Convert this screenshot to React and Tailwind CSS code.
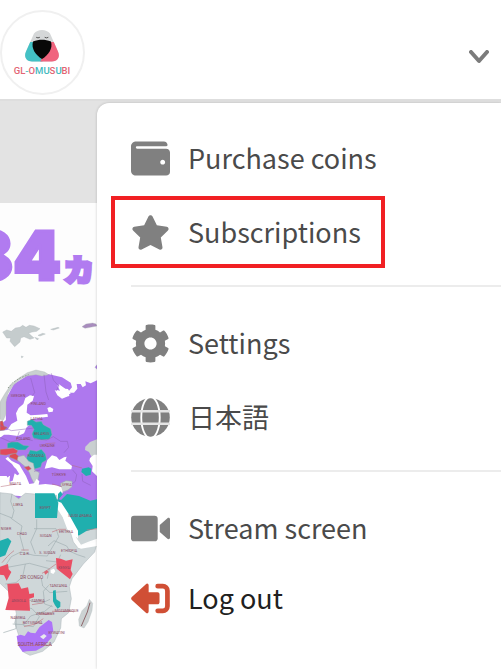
import { useState } from 'react';
import { FaWallet, FaStar, FaCog } from 'react-icons/fa';

const GlobeIcon = ({ className }) => (
    <svg viewBox="0 0 38 38" className={className} aria-hidden="true">
        <circle cx="19" cy="19" r="18.800" fill="currentColor" />
        <g fill="none" stroke="#fff" strokeWidth="1.800">
            <ellipse cx="19" cy="19" rx="9" ry="20" />
            <path d="M0 13h38M0 25h38" stroke="#e4e4e4" strokeWidth="2.400" />
        </g>
    </svg>
);

const VideoIcon = ({ className }) => (
    <svg viewBox="0 0 38 38" className={className} fill="currentColor" aria-hidden="true">
        <rect x="0" y="6.500" width="26" height="25" rx="3" />
        <path d="M28 15.500 35.500 9c1-.9 2.500-.3 2.500 1v18c0 1.300-1.500 1.900-2.500 1L28 22.500Z" />
    </svg>
);

const LogoutIcon = ({ className }) => (
    <svg viewBox="0 0 38 30" className={className} fill="none" aria-hidden="true">
        <path
            d="M.8 13.600 14.500 1c1.300-1.200 2.700-.4 2.700 1.400V9h8.600c1.200 0 2 .8 2 2v7.600c0 1.200-.8 2-2 2h-8.600v6.800c0 1.800-1.400 2.600-2.700 1.400L.8 16.400c-.9-.8-.9-2 0-2.800Z"
            fill="#d04f35"
        />
        <path d="M26 3h5a4.500 4.500 0 0 1 4.500 4.500v15a4.500 4.500 0 0 1-4.500 4.500h-5" stroke="#d04f35" strokeWidth="4.600" strokeLinecap="round" />
    </svg>
);

const groups = [
    {
        id: 'account',
        items: [
            { label: 'Purchase coins', icon: FaWallet },
            { label: 'Subscriptions', icon: FaStar, highlighted: true },
        ],
    },
    {
        id: 'preferences',
        items: [
            { label: 'Settings', icon: FaCog },
            { label: '日本語', icon: GlobeIcon, lang: 'ja' },
        ],
    },
    {
        id: 'session',
        compact: true,
        items: [
            { label: 'Stream screen', icon: VideoIcon },
            { label: 'Log out', icon: LogoutIcon, dark: true },
        ],
    },
];

const northLabels = [
    { text: 'SWEDEN', x: 54, y: 112 },
    { text: 'FINLAND', x: 115, y: 134 },
    { text: 'LATVIA', x: 110, y: 180 },
    { text: 'BELARUS', x: 125, y: 226 },
    { text: 'POLAND', x: 70, y: 241 },
    { text: 'UKRAINE', x: 142, y: 261 },
    { text: 'ROMANIA', x: 107, y: 291 },
    { text: 'TÜRKIYE', x: 177, y: 348 },
    { text: 'MALTA', x: 46, y: 376 },
    { text: 'SYRIA', x: 200, y: 377 },
    { text: 'IRAQ', x: 233, y: 399 },
];

const southLabels = [
    { text: 'LIBYA', x: 54, y: 49 },
    { text: 'EGYPT', x: 136, y: 56 },
    { text: 'SAUDI ARABIA', x: 240, y: 80 },
    { text: 'NIGER', x: 18, y: 120 },
    { text: 'CHAD', x: 66, y: 136 },
    { text: 'SUDAN', x: 137, y: 140 },
    { text: 'ERITREA', x: 198, y: 128 },
    { text: 'C.A.R.', x: 74, y: 195 },
    { text: 'S. SUDAN', x: 142, y: 192 },
    { text: 'ETHIOPIA', x: 207, y: 186 },
    { text: 'KENYA', x: 192, y: 238 },
    { text: 'DR CONGO', x: 95, y: 268, size: 14 },
    { text: 'TANZANIA', x: 175, y: 292 },
    { text: 'ANGOLA', x: 56, y: 335 },
    { text: 'ZAMBIA', x: 114, y: 336 },
    { text: 'ZIMBABWE', x: 136, y: 376 },
    { text: 'MOZAMBIQUE', x: 200, y: 365 },
    { text: 'NAMIBIA', x: 54, y: 388 },
    { text: 'BOTSWANA', x: 98, y: 402 },
    { text: 'ESWATINI', x: 170, y: 432 },
    { text: 'SOUTH AFRICA', x: 104, y: 468, size: 15 },
];

function Logo() {
    return (
        <svg viewBox="0 0 81 81" className="size-full" role="img" aria-label="GL-OMUSUBI">
            <defs>
                <clipPath id="rice">
                    <path d="M32 21.500c3.500-4.800 12.500-4.800 16 0l8 18c2.500 5.500-.5 10-6 10H30c-5.500 0-8.500-4.500-6-10Z" />
                </clipPath>
            </defs>
            <g clipPath="url(#rice)">
                <path d="M20 15h40v40H20Z" fill="#d5d7d8" />
                <path d="M20 30h12l8.500 15v8H20Z" fill="#43c1c5" />
                <path d="M60 30H48l-7.500 15-4 8H60Z" fill="#f0647e" />
            </g>
            <path d="M31 29.500c6-2.500 12-2.500 18 0 2 7-2.500 13.500-9 17.500-6.500-4-11-10.500-9-17.500Z" fill="#080808" />
            <path d="M34.500 25.500q1.500 1 3 0M43 25.500q1.500 1 3 0" fill="none" stroke="#555" strokeWidth="1" strokeLinecap="round" />
            <text x="40" y="62" textAnchor="middle" fontSize="9.500" fontWeight="500" fontFamily="Roboto, sans-serif">
                <tspan fill="#e26573">GL</tspan>
                <tspan fill="#59bfc2">-</tspan>
                <tspan fill="#e26573">O</tspan>
                <tspan fill="#42b9be">MU</tspan>
                <tspan fill="#e26573">S</tspan>
                <tspan fill="#42b9be">U</tspan>
                <tspan fill="#e26573">BI</tspan>
            </text>
        </svg>
    );
}

function MapLabels({ labels }) {
    return (
        <g fill="#8d4a62" fontFamily="Roboto, sans-serif" textAnchor="middle">
            {labels.map((l) => (
                <text key={l.text} x={l.x} y={l.y} fontSize={l.size || 11}>{l.text}</text>
            ))}
        </g>
    );
}

function WorldMap() {
    return (
        <svg viewBox="0 0 291 1107" className="block w-full" role="img" aria-label="World map">
            {/* Arctic islands */}
            <g transform="translate(0 30)" fill="#c5cccd" stroke="#aab4b6" strokeWidth="1">
                <path d="m8 66 12-6 14 4 12-10 14-2 8-6 10 6 10-6 14 2 18 8-10 8-14 2-10 4 16 14-12 4-18-8-10 4-2 12-16 14-14-16 2-10-12 0Z" />
                <path d="m114 76 14-6 8 2-16 6Zm38-18 22-6 4 2-18 6Zm-48 24 12 4-4 4Z" />
                <path d="m64 138 6 2-5 4Z" />
                <path d="m246 50 12-8 20-3 10 3 3 6-20 4-16 3Z" fill="#a88cbd" />
                <path d="m285 172 6-8v14Z" fill="#ae78ee" />
            </g>

            {/* Europe, Russia and the Middle East */}
            <g transform="translate(0 180)">
                <path d="m0 450V195l18-15-2-60 26-48 42-26 30-8 30 4 42 10 26 16 4 14-14 16-22 0-16-8 8 16 14 10 14-6 2-12 20 0 10-12-2-14 12 0 6 10 10-6-2-12 16 6 24-12v378Z" fill="#ae78ee" />
                <path d="m0 148 0-22 14-24 16-24 24-22 28-18 26-8 26 6 12 8-20 4-18-4-28 4-22 12-18 16-16 24-6 26 0 36-8 18-10-2Z" fill="#c9d0d0" stroke="#a9b2ae" strokeWidth="1" />
                <path d="m24 84 14-16 22-14 26-10" fill="none" stroke="#8f9c8d" strokeWidth="3" strokeDasharray="5 4" />

                {/* Baltic Sea and lakes */}
                <path d="m0 212 22-2 12-18 18-10-4-22 8-16 14-12 6-18 14-8 12 2-4 14-16 12-2 24 12 8 26-2 24-2 2 8-28 4-24 4 0 14-12 10-8 18-18 8-28-4-14 0-16 12Z" fill="#fff" />
                <path d="m142 144 8-3 10 6-2 8-12 2Z" fill="#fff" />
                <path d="m172 76 22 10 12 8 2 14-14 4-20-8-4-14 10 2Z" fill="#fff" />
                <path d="m176 72 20 14 8 1 8 14-12 3-16-10Z" fill="#fff" />

                <g stroke="#97aaad" strokeWidth="1.500" strokeLinejoin="round">
                    <path d="m0 184 8-2 4 16 10 4-8 8-14 2Z" fill="#dc4b53" />
                    <path d="m82 184 14-6 12 8 16-2 6 10 22 12 4 18-8 14-24 2-24-6-4-12 6-14-8-12-12 0Z" fill="#20afae" />
                    <path d="m22 250 12-4 20 0 16 10 18 2-12 12-22 0-18-6-14 0Z" fill="#20afae" />
                    <path d="m90 270 20 4 14-6 12 14 4 18-14 8-4 14-22 6-14-10-8-20Z" fill="#20afae" />
                    <path d="m0 268 22-2 18-2 14 8-6 10-14 0-16 4-18-2Z" fill="#e04a5c" />
                    <path d="m30 284 16-4 14 12 2 12-10-2-12-6-12-4Z" fill="#dc4b53" />
                    <path d="m54 290 18-4 14 18 14 6 4 20 14 8-4 22-12 10-8-16-6-16-10-16-12-10-14-12Z" fill="#cad0d1" />
                    <path d="m72 322 14-4 8 8-10 6Z" fill="#e04a5c" />
                    <path d="m182 370 16-8 18 2 0 16-12 10-22 8Z" fill="#cad0d1" />
                </g>

                {/* Mediterranean, Black Sea, Caspian */}
                <path d="M24 290c8 14 20 16 34 24l20 34 10 24 14-2 8-14 8 8-2 10 20-2 34 4 14 6 4 14-6 22-36-2-22-8-38 12-26-12-34-2-26-4v-38l10-2 18-14 12-4 8-14-12-18-20-16Z" fill="#fff" />
                <path d="m0 292 16 4 10 14 22 16 10 16-6 4-8-6-6 22-10 4 2-18-16-20-14-12Z" fill="#ae78ee" />
                <path d="m0 348 20 0 8 16-28 6Z" fill="#fff" />
                <path d="m142 300 14-14 14 4 8 10 14-8 8-2-4 12 20 16-2 10-36 0-22-6-22 4Z" fill="#fff" />
                <path d="m256 260 14-14 21-8v50l-16 4-8-16-12-6Z" fill="#c9cfd0" />
                <path d="m270 294 12-10 9 0v64l-15-14 2-16-10-16Z" fill="#fff" />
                <path d="m246 326 20-4 8 4-2 18-14 4-14-12Z" fill="#20afae" />
                <path d="m174 402 8-8 4 6-4 22-8-6Z" fill="#20afae" />
                <path d="m266 400 25 12v38h-30Z" fill="#ae78ee" />

                <g fill="none" stroke="#8d61b9" strokeWidth="1.500">
                    <path d="m92 54 12 44-8 10M132 44l6 52 8 24M154 40l6 20 16 18-6 12M0 196l34 16 68-8M0 232l32 14 44-10 22 6M58 214l-8 24M102 236l38 4 20-10 22 14 20 0 4 18-14 16M120 330l-18 4M218 330l12 14-4 20-10 8M246 342l2 22 24 12" />
                </g>
                <path d="m216 316 30 8M2 380l48-8M156 372l30 8M136 251l30-2" fill="none" stroke="#b46a79" strokeWidth="1.500" />
                <MapLabels labels={northLabels} />
            </g>

            {/* Africa and Arabia */}
            <g transform="translate(0 570)">
                <path d="M0 8l36 4 20 14 20-16 28 2 66 4 10 50 28 50 12 40 14 18 20-2 36-8-6 22-34 36-34 44-8 24 6 36-8 42-22 18-2 28-20 42-34 28-38 12-20-10-12-44-14-44 6-22-6-32-14-36-32-30Z" fill="#cfd7d9" stroke="#aab5b8" strokeWidth="1.500" />
                <path d="m180 14 20-8 38-6 53 0v120l-50 24-14-18-32-58-24-36Z" fill="#20afae" />
                <path d="m176 28 16-20 26-8h73v28l-20 4-34-14-36-6-18 18Z" fill="#ae78ee" />
                <path d="m228 142 30-18 33-10v32l-22 8-26 10Z" fill="#cfd7d9" />
                <path d="m168 32 16 6 22 34 28 50 0 24-12-12-20-16-14-36-16-26Z" fill="#fff" />
                <path d="m232 172 20-8 39-8v12l-48 8Z" fill="#fff" />

                <g fill="none" stroke="#a0adb0" strokeWidth="2">
                    <path d="m0 70 36 14 6-22-10-28 4-22m-4 72 34 24-6 30 12 44m38-94 0 28-18 40 14 36m-4-76h66m0 0 8 24-18 30-16 28-40-2-40-10-28 14-20 30m130-62 18-16 38 16 10 16 22 10 24 8m-74-8-10 22-34-4m-116 20 66-12 60 16-6 30m-66-44-8 38-20 18-32 4m108-16 4 22 22 20 52-4m-56-18-16 18 4 38 24 8m-72-20 38 10 26-12m-22 38-36 12-20 26-34-2m10-28v42l-38 12m60-78 26 6 22 24-18 30-30-4m40-34 24-8 22-18" />
                </g>

                <path d="M105 10h58l12 28-4 46h-66Z" fill="#20afae" />
                <path d="m0 152 24-8 10 10-10 22-8 20-16 6Z" fill="#20afae" />
                <path d="m168 204 14 2 16 6 20-4-6 32 6 12-8 16-40-32Z" fill="#e94e63" />
                <path d="m0 230 24-8 2 16 8 8-14 26-8-16-12-2Z" fill="#e94e63" />
                <path d="m22 282 34-2 8 16 20-4 4 20 14-2 0 12-14 4 2 36-74-2 10-36Z" fill="#e94e63" />
                <path d="m159 302 8-2 2 28 12 8 0 14-8 6-8-10-6-12Z" fill="#20afae" />
                <path d="m50 438 12-4 12 4 10-14 8 4 14 2 12-18 28-22 10 6 4 28-6 6 2 12-26 28-22 12-28 2-12 2-14-20Z" fill="#ad73f8" />
                <path d="m120 440 12-8 8 6-10 10Z" fill="#e7e9ed" />
                <path d="m152 240 10-4 4 8-6 8-8-4Z" fill="#fff" />
                <path d="m132 246 8-6 6 6-10 8Z" fill="#dc6472" />
                <path d="m268 328 10 12-2 22-12 34-12 18-14-6-2-20 10-26 14-14Z" fill="#ccd2d3" stroke="#aab5b8" />
                <path d="m270 338-8 28-18 42" fill="none" stroke="#8e656a" strokeWidth="3" />
                <path d="M6 218c12-14 20-24 36-36m22-2h22m40 70 20-12 22-16m-12-96 22-8 20 0M72 410l34-8 24-16m-14-14h40m0-8h68m-128-20 36-6M56 466h100m104-346 31-4" fill="none" stroke="#c37982" strokeWidth="2" />
                <MapLabels labels={southLabels} />
            </g>
        </svg>
    );
}

function MenuItem({ item, compact }) {
    const Icon = item.icon;
    return (
        <a
            href="#"
            lang={item.lang}
            className={`flex w-fit items-center gap-[18px] border-4 pl-4 pr-5 text-[27px] leading-9 ${compact ? 'h-[68px]' : 'h-[72px]'} ${item.highlighted ? 'border-[#f12023]' : 'border-transparent'} ${item.dark ? 'text-[#202020]' : 'text-[#4a4a4a]'}`}
        >
            <Icon className="size-[39px] shrink-0 text-[#808080]" />
            <span className="whitespace-nowrap">{item.label}</span>
        </a>
    );
}

export default function App() {
    const [open, setOpen] = useState(true);

    return (
        <div className="flex min-h-screen flex-col overflow-hidden bg-[#fdfdfd] font-['Noto_Sans_CJK_JP',sans-serif]">
            <header className="flex items-center justify-between bg-white pb-1 pr-2 pt-[10px]">
                <a href="#" className="size-[85px] overflow-hidden rounded-full border-2 border-[#f0f0f0] bg-white">
                    <Logo />
                </a>
                <button type="button" aria-label="Toggle menu" aria-expanded={open} onClick={() => setOpen(!open)} className="p-1">
                    <svg viewBox="0 0 20 14" className="mt-2 w-5" fill="none" stroke="#7b7b7b" strokeWidth="4" strokeLinecap="round" strokeLinejoin="round">
                        <path d="m2 2 8 9 8-9" />
                    </svg>
                </button>
            </header>

            <main className="relative flex-1">
                <div className="h-[104px] border-t-2 border-[#dedede] bg-[#e3e3e3]" />
                <div className="w-[97px] overflow-hidden">
                    <h1 className="flex h-[97px] items-baseline justify-end pt-3 font-['Inter',sans-serif] text-[68px] font-black leading-[80px] text-[#b17bf0] [-webkit-text-stroke:3px_#b17bf0]">
                        84<span className="font-['Noto_Sans_CJK_JP',sans-serif] text-[36px] leading-8">ヵ</span>
                    </h1>
                    <WorldMap />
                </div>

                {open && (
                    <nav aria-label="Account" className="absolute bottom-0 left-[97px] right-0 top-1 rounded-tl-xl bg-white pl-[14px] pt-[19px] shadow-[0_0_3px_rgba(0,0,0,0.2)]">
                        {groups.map((group, i) => (
                            <div key={group.id}>
                                {i > 0 && <hr className="mb-5 ml-5 mt-[17px] border-t-2 border-[#ececec]" />}
                                <div className={`flex flex-col gap-[2px] ${group.compact ? 'pt-[2px]' : ''}`}>
                                    {group.items.map((item) => (
                                        <MenuItem key={item.label} item={item} compact={group.compact} />
                                    ))}
                                </div>
                            </div>
                        ))}
                    </nav>
                )}
            </main>
        </div>
    );
}
